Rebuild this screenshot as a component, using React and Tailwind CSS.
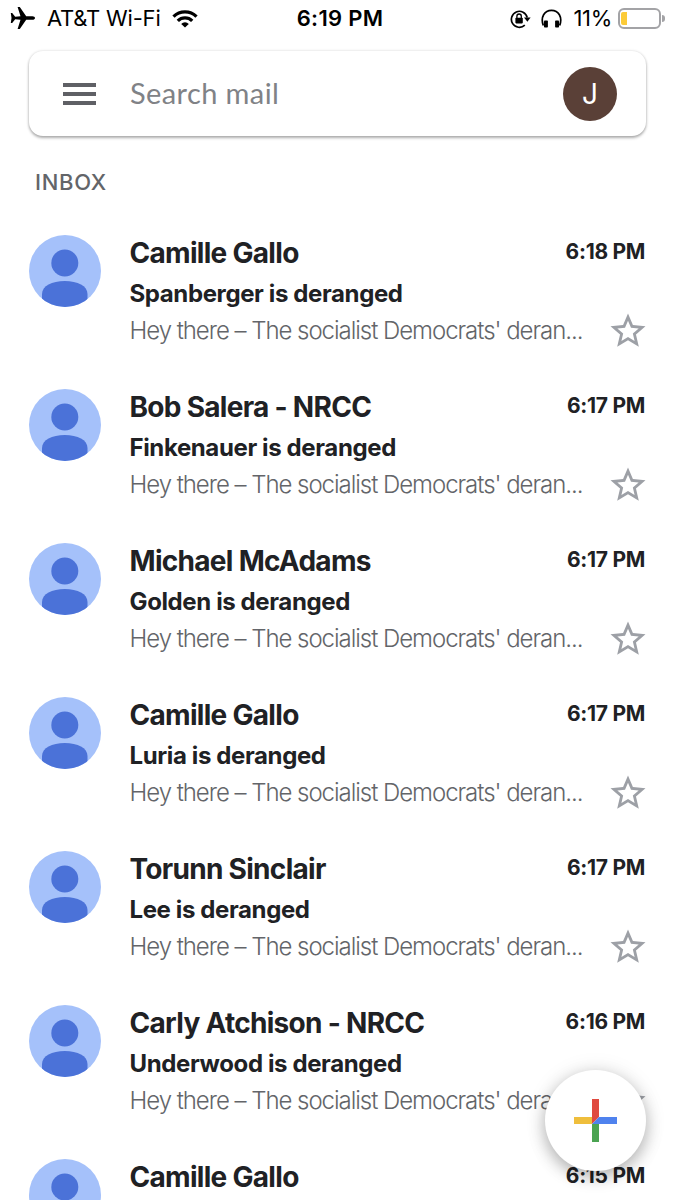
const MAILS = [
  { from: 'Camille Gallo', subject: 'Spanberger is deranged', time: '6:18 PM' },
  { from: 'Bob Salera - NRCC', subject: 'Finkenauer is deranged', time: '6:17 PM' },
  { from: 'Michael McAdams', subject: 'Golden is deranged', time: '6:17 PM' },
  { from: 'Camille Gallo', subject: 'Luria is deranged', time: '6:17 PM' },
  { from: 'Torunn Sinclair', subject: 'Lee is deranged', time: '6:17 PM' },
  { from: 'Carly Atchison - NRCC', subject: 'Underwood is deranged', time: '6:16 PM' },
  { from: 'Camille Gallo', time: '6:15 PM' },
]

const PREVIEW = "Hey there – The socialist Democrats' deran..."

/* iOS status bar */
function StatusBar() {
  return (
    <div className="relative flex h-[37px] items-center pl-[10px] pr-[10px] text-black">
      <svg width="26" height="24" viewBox="0 0 26 24" className="mb-[2px] shrink-0">
        <path d="M25 12c0 1-1.100 1.800-2.600 1.800h-6.200L9.800 23H7.600l2.900-9.300-5.300-.4L2.200 17H.8l.7-5L.8 7h1.400l3 3.700 5.300-.4L7.600 1h2.200l6.400 9.200h6.200c1.500 0 2.600.8 2.600 1.800z" />
      </svg>
      <span className="ml-[11px] text-[22px] tracking-[-0.2px] whitespace-nowrap">AT&amp;T Wi-Fi</span>
      <svg width="26" height="18" viewBox="0 0 26 18" className="ml-[11px] shrink-0">
        <g fill="none" stroke="#000" strokeWidth="3.300">
          <path d="M1.500 6.600a16.500 16.500 0 0 1 23 0" />
          <path d="M5.800 10.900a10.300 10.300 0 0 1 14.400 0" />
        </g>
        <path d="M13 17.600l-3.800-3.700a5.400 5.400 0 0 1 7.600 0z" />
      </svg>

      <div className="absolute inset-x-0 text-center text-[22px] font-semibold tracking-[0.3px] pl-[5px]">6:19 PM</div>

      <div className="ml-auto flex items-center">
        <svg width="21" height="20" viewBox="0 0 21 20">
          <path d="M14.800 16.200A8 8 0 1 1 17.200 8.500" fill="none" stroke="#000" strokeWidth="1.700" />
          <path d="M14 8.500h6.600l-3.200 4.300z" />
          <rect x="5.400" y="8.800" width="7.400" height="5.600" rx=".8" />
          <path d="M6.900 9V7.200a2.200 2.200 0 0 1 4.400 0V9" fill="none" stroke="#000" strokeWidth="1.300" />
        </svg>
        <svg width="21" height="19" viewBox="0 0 21 19" className="ml-[10px]">
          <path d="M2.300 16.500C-.8 8 3.500 1.300 10.500 1.300S21.800 8 18.700 16.500" fill="none" stroke="#000" strokeWidth="1.700" />
          <rect x="3" y="11.500" width="3.900" height="7" rx=".8" />
          <rect x="14.100" y="11.500" width="3.900" height="7" rx=".8" />
        </svg>
        <span className="ml-[11px] text-[22px] tracking-[-0.3px]">11%</span>
        <div className="ml-[6px] h-[21px] w-[43px] rounded-[6px] border-2 border-[#a3a3a6] py-[2px] pl-[1px]">
          <div className="h-full w-[6px] rounded-l-[2px] bg-[#fccb38]" />
        </div>
        <div className="ml-[1px] h-[7px] w-[3px] rounded-r-full bg-[#a3a3a6]" />
      </div>
    </div>
  )
}

function SearchBar() {
  return (
    <div className="ml-[29px] mt-[14px] flex h-[85px] w-[617px] items-center rounded-[14px] bg-white pl-[34px] pr-[29px] shadow-[0_2px_3px_rgba(0,0,0,0.3),0_0_3px_rgba(0,0,0,0.14)]">
      <div className="flex w-[33px] flex-col gap-[5px]">
        <div className="h-[4px] bg-[#5f6065]" />
        <div className="h-[4px] bg-[#5f6065]" />
        <div className="h-[4px] bg-[#5f6065]" />
      </div>
      <span className="mb-[2px] ml-[34px] font-[Lato,sans-serif] text-[29px] tracking-[0.4px] text-[#808286]">Search mail</span>
      <div className="ml-auto flex size-[54px] items-center justify-center rounded-full bg-[#5a4037] text-[28px] text-white">J</div>
    </div>
  )
}

function Avatar() {
  return (
    <svg width="72" height="72" viewBox="0 0 72 72" className="mt-[2px] shrink-0">
      <clipPath id="face"><circle cx="36" cy="36" r="36" /></clipPath>
      <g clipPath="url(#face)">
        <rect width="72" height="72" fill="#a5c1fa" />
        <circle cx="35.800" cy="28" r="13.500" fill="#4b72d8" />
        <path d="M13 72V59c0-8 10-13 22.800-13s22.700 5 22.700 13v13z" fill="#4b72d8" />
      </g>
    </svg>
  )
}

function MailRow({ from, subject, time }) {
  return (
    <div className="flex h-[154px] pl-[29px] pr-[30px]">
      <Avatar />
      <div className="ml-[28.500px] min-w-0 flex-1 whitespace-nowrap">
        <div className="flex h-[40px] items-center justify-between">
          <span className="text-[28px] font-bold tracking-[-0.7px] text-[#202124]">{from}</span>
          <span className="mb-[2px] text-[21px] font-bold tracking-[-0.3px] text-[#202124]">{time}</span>
        </div>
        {subject && (
          <>
            <div className="h-[41px] text-[24px] leading-[41px] font-bold tracking-[-0.380px] text-[#202124]">{subject}</div>
            <div className="flex h-[34px] items-center justify-between">
              <span className="text-[24px] font-light tracking-[-1.040px] text-[#636569]">{PREVIEW}</span>
              <svg width="42" height="42" viewBox="0 0 24 24" fill="#9da0a6" className="-mr-[4px] mb-px shrink-0">
                <path d="M22 9.240l-7.190-.62L12 2 9.190 8.630 2 9.240l5.460 4.730L5.820 21 12 17.270 18.180 21l-1.630-7.030L22 9.240zM12 15.400l-3.760 2.270 1-4.280-3.320-2.880 4.380-.38L12 6.100l1.710 4.040 4.380.38-3.320 2.880 1 4.280L12 15.400z" />
              </svg>
            </div>
          </>
        )}
      </div>
    </div>
  )
}

/* Floating compose button */
function Compose() {
  return (
    <div className="absolute left-[545px] top-[1070px] flex size-[101px] items-center justify-center rounded-full bg-white shadow-[0_6px_16px_rgba(0,0,0,0.26),0_1px_22px_rgba(0,0,0,0.1)]">
      <svg width="43" height="43" viewBox="0 0 43 43">
        <path d="M18 0h7v18l-7 7z" fill="#e04a3f" />
        <path d="M0 18h18v7H0z" fill="#efbe3c" />
        <path d="M25 18v7h-7z" fill="#4f82ee" />
        <path d="M18 25h7v18h-7z" fill="#4ba452" />
        <path d="M25 18h18v7H25z" fill="#4f82ee" />
      </svg>
    </div>
  )
}

export default function App() {
  return (
    <div className="relative h-[1200px] w-[675px] overflow-hidden bg-white font-[Inter,sans-serif]">
      <StatusBar />
      <SearchBar />
      <div className="ml-[35px] mt-[31px] h-[30px] text-[22px] leading-[30px] font-medium tracking-[0.7px] text-[#636569]">INBOX</div>
      <div className="mt-[36px]">
        {MAILS.map((mail, i) => <MailRow key={i} {...mail} />)}
      </div>
      <Compose />
    </div>
  )
}
